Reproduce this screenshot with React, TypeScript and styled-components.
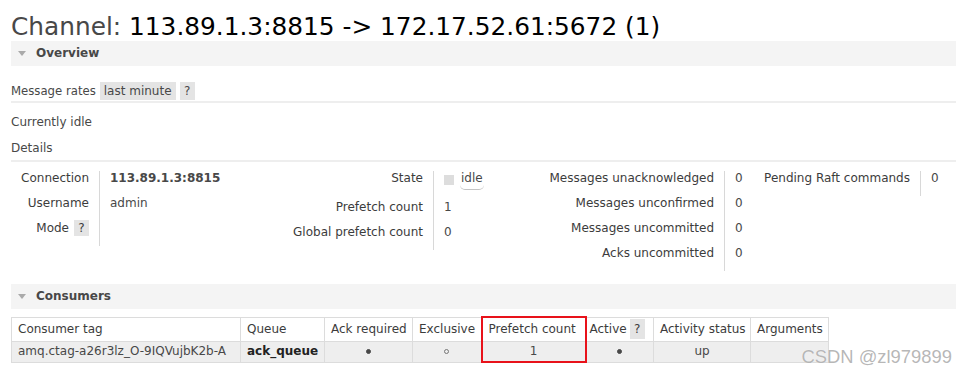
import React from 'react';
import styled, { createGlobalStyle } from 'styled-components';

const Global = createGlobalStyle`
  html, body { margin: 0; padding: 0; background: #fff; }
  body {
    font-family: "DejaVu Sans", Verdana, sans-serif;
    font-size: 12px;
    line-height: 15px;
    color: #484848;
  }
`;

const Page = styled.div`
  position: relative;
  width: 956px;
  height: 374px;
  overflow: hidden;
  padding-left: 11px;
  box-sizing: border-box;
`;

const Title = styled.h1`
  margin: 13px 0 0;
  font-size: 24.8px;
  line-height: 28px;
  font-weight: normal;
  color: #484848;
  white-space: nowrap;
`;

const TitleName = styled.span`
  color: #000;
`;

const Section = styled.section<{ $gap?: number }>`
  margin-top: ${(p) => p.$gap ?? 0}px;
`;

const SectionBar = styled.h2`
  margin: 0;
  height: 25px;
  display: flex;
  align-items: center;
  gap: 10px;
  padding-left: 7px;
  background: #f4f4f4;
  font-size: 12px;
  font-weight: bold;
  color: #484848;
`;

const Triangle = styled.span`
  width: 0;
  height: 0;
  border-left: 4.5px solid transparent;
  border-right: 4.5px solid transparent;
  border-top: 5px solid #aaa;
`;

const RatesRow = styled.div`
  display: flex;
  align-items: flex-start;
  gap: 4px;
  margin-top: 16px;
  height: 19px;
  border-bottom: 2px solid #eee;
`;

const RatesLabel = styled.span`
  font-size: 11.7px;
  line-height: 18px;
`;

const GrayBox = styled.span<{ $w?: number }>`
  display: inline-flex;
  align-items: center;
  justify-content: center;
  height: 18px;
  padding: 0 ${(p) => (p.$w ? 0 : 4)}px;
  width: ${(p) => (p.$w ? `${p.$w}px` : 'auto')};
  background: #e4e4e4;
  box-sizing: border-box;
`;

const Para = styled.p<{ $top: number }>`
  margin: ${(p) => p.$top}px 0 0;
`;

const SubHeading = styled.h3`
  margin: 11px 0 0;
  font-size: 12px;
  font-weight: normal;
  padding-bottom: 4px;
  border-bottom: 2px solid #eee;
`;

const Facts = styled.div`
  display: flex;
  align-items: flex-start;
  margin-top: 9px;
`;

const FactGroup = styled.div<{ $label: number; $value: number }>`
  display: grid;
  grid-template-columns: ${(p) => p.$label}px ${(p) => p.$value}px;
`;

const FactLabel = styled.div`
  display: flex;
  justify-content: flex-end;
  align-items: flex-start;
  gap: 5px;
  padding: 0 10px 10px 0;
  white-space: nowrap;
  color: #3c3c3c;
`;

const FactValue = styled.div<{ $bold?: boolean }>`
  border-left: 1px solid #d8d8d8;
  padding: 0 0 10px 10px;
  white-space: nowrap;
  font-weight: ${(p) => (p.$bold ? 'bold' : 'normal')};
`;

const HelpBox = styled.span<{ $tall?: boolean }>`
  display: inline-flex;
  align-items: center;
  justify-content: center;
  width: 15px;
  height: ${(p) => (p.$tall ? 20 : 16)}px;
  margin-top: ${(p) => (p.$tall ? 0 : -1)}px;
  background: #e4e4e4;
`;

const StateBadge = styled.span`
  display: inline-flex;
  align-items: flex-start;
  gap: 6px;
`;

const StateSquare = styled.span`
  width: 10px;
  height: 10px;
  margin-top: 4px;
  background: #ddd;
`;

const StateText = styled.span`
  padding: 0 1px 3px;
  border-bottom: 1px solid #c4c4c4;
  border-radius: 0 0 5px 5px;
`;

const Table = styled.table`
  margin-top: 7px;
  border-collapse: collapse;
  table-layout: fixed;
  width: 817px;
`;

const Col = styled.col<{ $w: number }>`
  width: ${(p) => p.$w}px;
`;

const HeadRow = styled.tr`
  height: 24px;
`;

const BodyRow = styled.tr`
  height: 21px;
  background: #eee;
`;

const Th = styled.th<{ $hl?: boolean; $padLeft?: number }>`
  padding: 0 6px 0 ${(p) => p.$padLeft ?? 6}px;
  text-align: left;
  font-weight: normal;
  white-space: nowrap;
  background: #fff;
  color: #3c3c3c;
  border: 1px solid #dcdcdc;
  ${(p) => (p.$hl ? 'border: 2px solid #e8121a; border-bottom: 1px solid #dcdcdc;' : '')}
`;

const ThInner = styled.span`
  display: inline-flex;
  align-items: center;
  gap: 3px;
`;

const Td = styled.td<{ $center?: boolean; $bold?: boolean; $hl?: boolean }>`
  padding: 0 6px;
  white-space: nowrap;
  text-align: ${(p) => (p.$center ? 'center' : 'left')};
  font-weight: ${(p) => (p.$bold ? 'bold' : 'normal')};
  color: ${(p) => (p.$bold ? '#222' : '#484848')};
  border: 1px solid #dcdcdc;
  ${(p) => (p.$hl ? 'border: 2px solid #e8121a; border-top: 1px solid #dcdcdc;' : '')}
`;

const Dot = styled.span<{ $filled?: boolean }>`
  display: inline-block;
  width: 5px;
  height: 5px;
  border-radius: 50%;
  box-sizing: border-box;
  vertical-align: middle;
  background: ${(p) => (p.$filled ? '#484848' : 'transparent')};
  border: 1px solid ${(p) => (p.$filled ? '#484848' : '#777')};
`;

const Watermark = styled.div`
  position: absolute;
  right: 4px;
  bottom: 7px;
  font-family: "Liberation Sans", Arial, sans-serif;
  font-size: 18.4px;
  line-height: 20px;
  color: rgba(160, 160, 160, 0.75);
  text-shadow: 0 0 1px rgba(255, 255, 255, 0.9);
  white-space: nowrap;
`;

const facts: Array<{
  label: number;
  value: number;
  rows: Array<{ k: React.ReactNode; v: React.ReactNode; bold?: boolean }>;
}> = [
  {
    label: 88,
    value: 160,
    rows: [
      { k: 'Connection', v: '113.89.1.3:8815', bold: true },
      { k: 'Username', v: 'admin' },
      {
        k: (
          <>
            Mode <HelpBox>?</HelpBox>
          </>
        ),
        v: '',
      },
    ],
  },
  {
    label: 174,
    value: 80,
    rows: [
      {
        k: 'State',
        v: (
          <StateBadge>
            <StateSquare />
            <StateText>idle</StateText>
          </StateBadge>
        ),
      },
      { k: 'Prefetch count', v: '1' },
      { k: 'Global prefetch count', v: '0' },
    ],
  },
  {
    label: 211,
    value: 40,
    rows: [
      { k: 'Messages unacknowledged', v: '0' },
      { k: 'Messages unconfirmed', v: '0' },
      { k: 'Messages uncommitted', v: '0' },
      { k: 'Acks uncommitted', v: '0' },
    ],
  },
  {
    label: 156,
    value: 36,
    rows: [{ k: 'Pending Raft commands', v: '0' }],
  },
];

const columns = [229, 84, 88, 69, 104, 68, 97, 78];

export default function App() {
  return (
    <>
      <Global />
      <Page>
        <Title>
          Channel: <TitleName>113.89.1.3:8815 -&gt; 172.17.52.61:5672 (1)</TitleName>
        </Title>

        <Section>
          <SectionBar>
            <Triangle />
            Overview
          </SectionBar>
          <RatesRow>
            <RatesLabel>Message rates</RatesLabel>
            <GrayBox>last minute</GrayBox>
            <GrayBox $w={15}>?</GrayBox>
          </RatesRow>
          <Para $top={12}>Currently idle</Para>
          <SubHeading>Details</SubHeading>
          <Facts>
            {facts.map((g, gi) => (
              <FactGroup key={gi} $label={g.label} $value={g.value}>
                {g.rows.map((r, ri) => (
                  <React.Fragment key={ri}>
                    <FactLabel>{r.k}</FactLabel>
                    <FactValue $bold={r.bold}>{r.v}</FactValue>
                  </React.Fragment>
                ))}
              </FactGroup>
            ))}
          </Facts>
        </Section>

        <Section $gap={13}>
          <SectionBar>
            <Triangle />
            Consumers
          </SectionBar>
          <Table>
            <colgroup>
              {columns.map((w, i) => (
                <Col key={i} $w={w} />
              ))}
            </colgroup>
            <thead>
              <HeadRow>
                <Th>Consumer tag</Th>
                <Th>Queue</Th>
                <Th>Ack required</Th>
                <Th>Exclusive</Th>
                <Th $hl>Prefetch count</Th>
                <Th $padLeft={3}>
                  <ThInner>
                    Active <HelpBox $tall>?</HelpBox>
                  </ThInner>
                </Th>
                <Th>Activity status</Th>
                <Th>Arguments</Th>
              </HeadRow>
            </thead>
            <tbody>
              <BodyRow>
                <Td>amq.ctag-a26r3lz_O-9IQVujbK2b-A</Td>
                <Td $bold>ack_queue</Td>
                <Td $center>
                  <Dot $filled />
                </Td>
                <Td $center>
                  <Dot />
                </Td>
                <Td $center $hl>
                  1
                </Td>
                <Td $center>
                  <Dot $filled />
                </Td>
                <Td $center>up</Td>
                <Td />
              </BodyRow>
            </tbody>
          </Table>
        </Section>

        <Watermark>CSDN @zl979899</Watermark>
      </Page>
    </>
  );
}
